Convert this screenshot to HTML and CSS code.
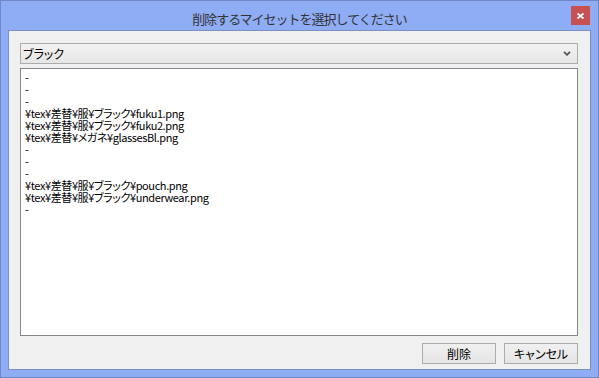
FILE: index.html
```html
<!DOCTYPE html>
<html lang="ja">
<head>
  <meta charset="UTF-8">
  <title>削除するマイセットを選択してください</title>
  <link rel="stylesheet" href="styles.css">
</head>
<body>
  <div class="window">
    <div class="titlebar">
      <div class="title">削除するマイセットを選択してください</div>
      <div class="close">
        <svg width="7" height="6" viewBox="0 0 7 6"><path d="M0.5 0.5 L6.5 5.5 M6.5 0.5 L0.5 5.5" stroke="#fff" stroke-width="1.8" fill="none"/></svg>
      </div>
    </div>

    <div class="client">
      <div class="combo">
        <span class="combo-text">ブラック</span>
        <svg class="combo-arrow" width="8" height="5" viewBox="0 0 8 5"><path d="M1 0.8 L4 3.8 L7 0.8" stroke="#555" stroke-width="1.8" fill="none"/></svg>
      </div>

      <div class="list">-
-
-
¥tex¥差替¥服¥ブラック¥fuku1.png
¥tex¥差替¥服¥ブラック¥fuku2.png
¥tex¥差替¥メガネ¥glassesBl.png
-
-
-
¥tex¥差替¥服¥ブラック¥pouch.png
¥tex¥差替¥服¥ブラック¥underwear.png
-</div>

      <div class="buttons">
        <button class="btn">削除</button>
        <button class="btn">キャンセル</button>
      </div>
    </div>
  </div>
</body>
</html>
```

FILE: styles.css
```css
body {
  margin: 0;
  font-family: "Noto Sans CJK JP", "Noto Sans", sans-serif;
}
.window {
  width: 599px;
  height: 378px;
  box-sizing: border-box;
  border: 1px solid #6f87c6;
  background-color: #8fadf5;
  padding: 0 7px 7px;
  display: flex;
  flex-direction: column;
}
.titlebar {
  height: 29px;
  display: grid;
  grid-template-columns: 1fr auto 1fr;
}
.title {
  grid-column: 2;
  font-size: 13px;
  letter-spacing: -1px;
  color: #333;
  line-height: 13px;
  padding-top: 11px;
  white-space: nowrap;
}
.close {
  grid-column: 3;
  justify-self: end;
  margin: 5px 1px 0 0;
  width: 19px;
  height: 19px;
  background-color: #c75050;
  display: flex;
  align-items: center;
  justify-content: center;
}
.client {
  flex: 1;
  background-color: #f0f0f0;
  border: 1px solid #7b90c0;
  padding: 12px 12px 5px 11px;
  display: flex;
  flex-direction: column;
  font-size: 12px;
  line-height: 12px;
  font-feature-settings: "palt";
}
.combo {
  height: 21px;
  box-sizing: border-box;
  border: 1px solid #acacac;
  background: linear-gradient(#f2f2f2, #e6e6e6);
  display: flex;
  align-items: center;
  padding: 0 6px 0 2px;
}
.combo-text {
  flex: 1;
}
.list {
  margin-top: 4px;
  height: 268px;
  box-sizing: border-box;
  border: 1px solid #828790;
  background-color: #fff;
  padding: 2px 4px;
  white-space: pre;
  color: #000;
  font-size: 11px;
  letter-spacing: -0.4px;
}
.buttons {
  margin-top: 7px;
  display: flex;
  justify-content: flex-end;
  gap: 8px;
}
.btn {
  width: 74px;
  height: 21px;
  box-sizing: border-box;
  border: 1px solid #acacac;
  background: linear-gradient(#f0f0f0, #e5e5e5);
  font-family: inherit;
  font-size: 12px;
  font-feature-settings: "palt";
  color: #000;
  padding: 0;
}
```
